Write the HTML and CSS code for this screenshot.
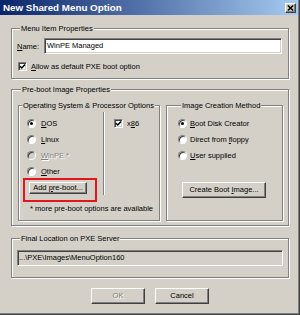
FILE: index.html
```html
<!DOCTYPE html>
<html>
<head>
<meta charset="utf-8">
<title>New Shared Menu Option</title>
<link rel="stylesheet" href="styles.css">
</head>
<body>
<div class="window">
  <div class="titlebar">
    <span class="title">New Shared Menu Option</span>
    <span class="close"><svg width="7" height="6" viewBox="0 0 7 6"><path d="M0.8 0.5 L6.2 5.5 M6.2 0.5 L0.8 5.5" stroke="#000" stroke-width="1.5" fill="none"/></svg></span>
  </div>
  <div class="content">
    <fieldset class="group g-menu">
      <legend>Menu Item Properties</legend>
      <div class="name-row">
        <span class="name-label"><u>N</u>ame:</span>
        <div class="textbox">WinPE Managed</div>
      </div>
      <div class="check-row">
        <span class="checkbox"><svg width="7" height="7" viewBox="0 0 7 7"><path d="M1 3.2 L2.8 5 L6 1.5" stroke="#000" stroke-width="1.5" fill="none"/></svg></span>
        <span><u>A</u>llow as default PXE boot option</span>
      </div>
    </fieldset>

    <fieldset class="group g-preboot">
      <legend>Pre-boot Image Properties</legend>
      <div class="preboot-cols">
        <fieldset class="group g-os">
          <legend>Operating System &amp; Processor Options</legend>
          <div class="os-body">
            <div class="os-left">
              <div class="os-radios">
                <div class="opt"><span class="radio on"></span><span><u>D</u>OS</span></div>
                <div class="opt"><span class="radio"></span><span><u>L</u>inux</span></div>
                <div class="opt disabled"><span class="radio"></span><span><u>W</u>inPE *</span></div>
                <div class="opt"><span class="radio"></span><span><u>O</u>ther</span></div>
              </div>
              <div class="highlight"><button class="btn btn-add">Add <u>p</u>re-boot...</button></div>
            </div>
            <div class="separator"></div>
            <div class="os-proc">
              <div class="opt"><span class="checkbox"><svg width="7" height="7" viewBox="0 0 7 7"><path d="M1 3.2 L2.8 5 L6 1.5" stroke="#000" stroke-width="1.5" fill="none"/></svg></span><span>x<u>8</u>6</span></div>
            </div>
          </div>
          <div class="note">* more pre-boot options are available</div>
        </fieldset>

        <fieldset class="group g-method">
          <legend>Image Creation Method</legend>
          <div class="opt"><span class="radio on"></span><span><u>B</u>oot Disk Creator</span></div>
          <div class="opt"><span class="radio"></span><span>Direct from <u>f</u>loppy</span></div>
          <div class="opt"><span class="radio"></span><span><u>U</u>ser supplied</span></div>
          <button class="btn btn-create">Create Boot <u>I</u>mage...</button>
        </fieldset>
      </div>
    </fieldset>

    <fieldset class="group g-final">
      <legend>Final Location on PXE Server</legend>
      <div class="textbox readonly">...\PXE\Images\MenuOption160</div>
    </fieldset>

    <div class="buttons">
      <button class="btn btn-dialog disabled">OK</button>
      <button class="btn btn-dialog">Cancel</button>
    </div>
  </div>
</div>
</body>
</html>
```

FILE: styles.css
```css
* { box-sizing: border-box; }
html, body { margin: 0; padding: 0; }
body {
  width: 300px;
  height: 315px;
  overflow: hidden;
  background: #d4d0c8;
  font-family: "Liberation Sans", Arial, sans-serif;
  font-size: 7.5px;
  line-height: 9px;
  color: #000;
}
u { text-decoration: underline; text-underline-offset: 1px; }

.window {
  width: 300px;
  height: 315px;
  display: flex;
  flex-direction: column;
  background: #d4d0c8;
  box-shadow: inset -1px -1px 0 #404040, inset -2px -2px 0 #808080;
}

.titlebar {
  height: 15px;
  margin-right: 2px;
  padding: 0 2px 0 3px;
  display: flex;
  align-items: center;
  justify-content: space-between;
  background: linear-gradient(to right, #0a246a, #a6caf0);
}
.title {
  color: #fff;
  font-weight: bold;
  font-size: 9.8px;
  line-height: 15px;
}
.close {
  width: 11px;
  height: 10px;
  background: #d4d0c8;
  border: 1px solid;
  border-color: #fff #404040 #404040 #fff;
  box-shadow: inset -1px -1px 0 #808080;
  display: flex;
  align-items: center;
  justify-content: center;
}
.close svg { display: block; }

.content {
  display: flex;
  flex-direction: column;
  padding: 9px 11px 0 11px;
}

.group {
  margin: 0;
  padding: 0;
  min-width: 0;
  border: 1px solid #808080;
  box-shadow: inset 1px 1px 0 #fff, 1px 1px 0 #fff;
}
.group > legend {
  margin-left: 3px;
  padding: 0 1px;
  height: 9px;
  line-height: 9px;
  background: #d4d0c8;
}

/* Menu item group */
.g-menu { padding: 5px 6px 7px 5px; }
.name-row {
  display: flex;
  align-items: center;
  height: 16px;
}
.name-label { width: 27px; flex: none; }
.textbox {
  flex: 1;
  height: 16px;
  background: #fff;
  border: 1px solid;
  border-color: #808080 #fff #fff #808080;
  box-shadow: inset 1px 1px 0 #404040, inset -1px -1px 0 #d4d0c8;
  padding: 0 2px;
  line-height: 14px;
  white-space: nowrap;
}
.textbox.readonly {
  background: #d4d0c8;
  padding: 0 1px;
}
.check-row {
  display: flex;
  align-items: center;
  height: 9px;
  margin-top: 8px;
  padding-left: 1px;
}
.checkbox {
  width: 9px;
  height: 9px;
  flex: none;
  background: #fff;
  border: 1px solid;
  border-color: #808080 #fff #fff #808080;
  box-shadow: inset 1px 1px 0 #404040, inset -1px -1px 0 #d4d0c8;
  display: flex;
  align-items: center;
  justify-content: center;
  margin-right: 4px;
}
.checkbox svg { display: block; }

/* Pre-boot group */
.g-preboot {
  margin-top: 6px;
  padding: 7px 5px 4px 6px;
}
.preboot-cols {
  display: flex;
  height: 120px;
}
.g-os {
  width: 142px;
  flex: none;
  padding: 5px 0 0 0;
}
.g-method {
  width: 117px;
  flex: none;
  margin-left: 6px;
  padding: 5px 0 0 11px;
}

.os-body {
  display: grid;
  grid-template-columns: 84px 2px auto;
}
.os-radios { padding-left: 8px; }
.separator {
  margin: -3px 0 7px 0;
  border-left: 1px solid #808080;
  border-right: 1px solid #fff;
}
.os-proc { padding-left: 9px; }

.opt {
  display: flex;
  align-items: center;
  height: 16px;
  white-space: nowrap;
}
.radio {
  width: 9px;
  height: 9px;
  flex: none;
  border-radius: 50%;
  background: #fff;
  border: 1px solid;
  border-color: #808080 #fff #fff #808080;
  box-shadow: inset 1px 1px 0 #404040;
  display: flex;
  align-items: center;
  justify-content: center;
  margin-right: 5px;
}
.g-method .radio { margin-right: 3px; }
.radio.on::after {
  content: "";
  width: 3px;
  height: 3px;
  border-radius: 50%;
  background: #000;
}
.opt.disabled .radio { background: #d4d0c8; }
.opt.disabled span:last-child,
.btn.disabled {
  color: #808080;
  text-shadow: 1px 1px 0 #fff;
}

.btn {
  display: block;
  font: inherit;
  color: #000;
  background: #d4d0c8;
  border: 1px solid;
  border-color: #fff #404040 #404040 #fff;
  box-shadow: inset -1px -1px 0 #808080;
  padding: 0;
  text-align: center;
  white-space: nowrap;
}
.highlight {
  width: fit-content;
  margin: -1px 0 0 4px;
  border: 2px solid #e3151d;
  padding: 2px 8px 6px 4px;
}
.btn-add { width: 58px; height: 12px; line-height: 10px; }
.note {
  margin: 1.5px 0 0 11px;
  white-space: nowrap;
}
.btn-create {
  width: 84px;
  height: 16px;
  line-height: 14px;
  margin: 19px 0 0 4px;
}

/* Final location */
.g-final {
  margin-top: 8px;
  padding: 7px 5px 11px 5px;
}

.buttons {
  display: flex;
  justify-content: center;
  gap: 10px;
  margin-top: 10px;
}
.btn-dialog { width: 54px; height: 16px; line-height: 14px; }
```
